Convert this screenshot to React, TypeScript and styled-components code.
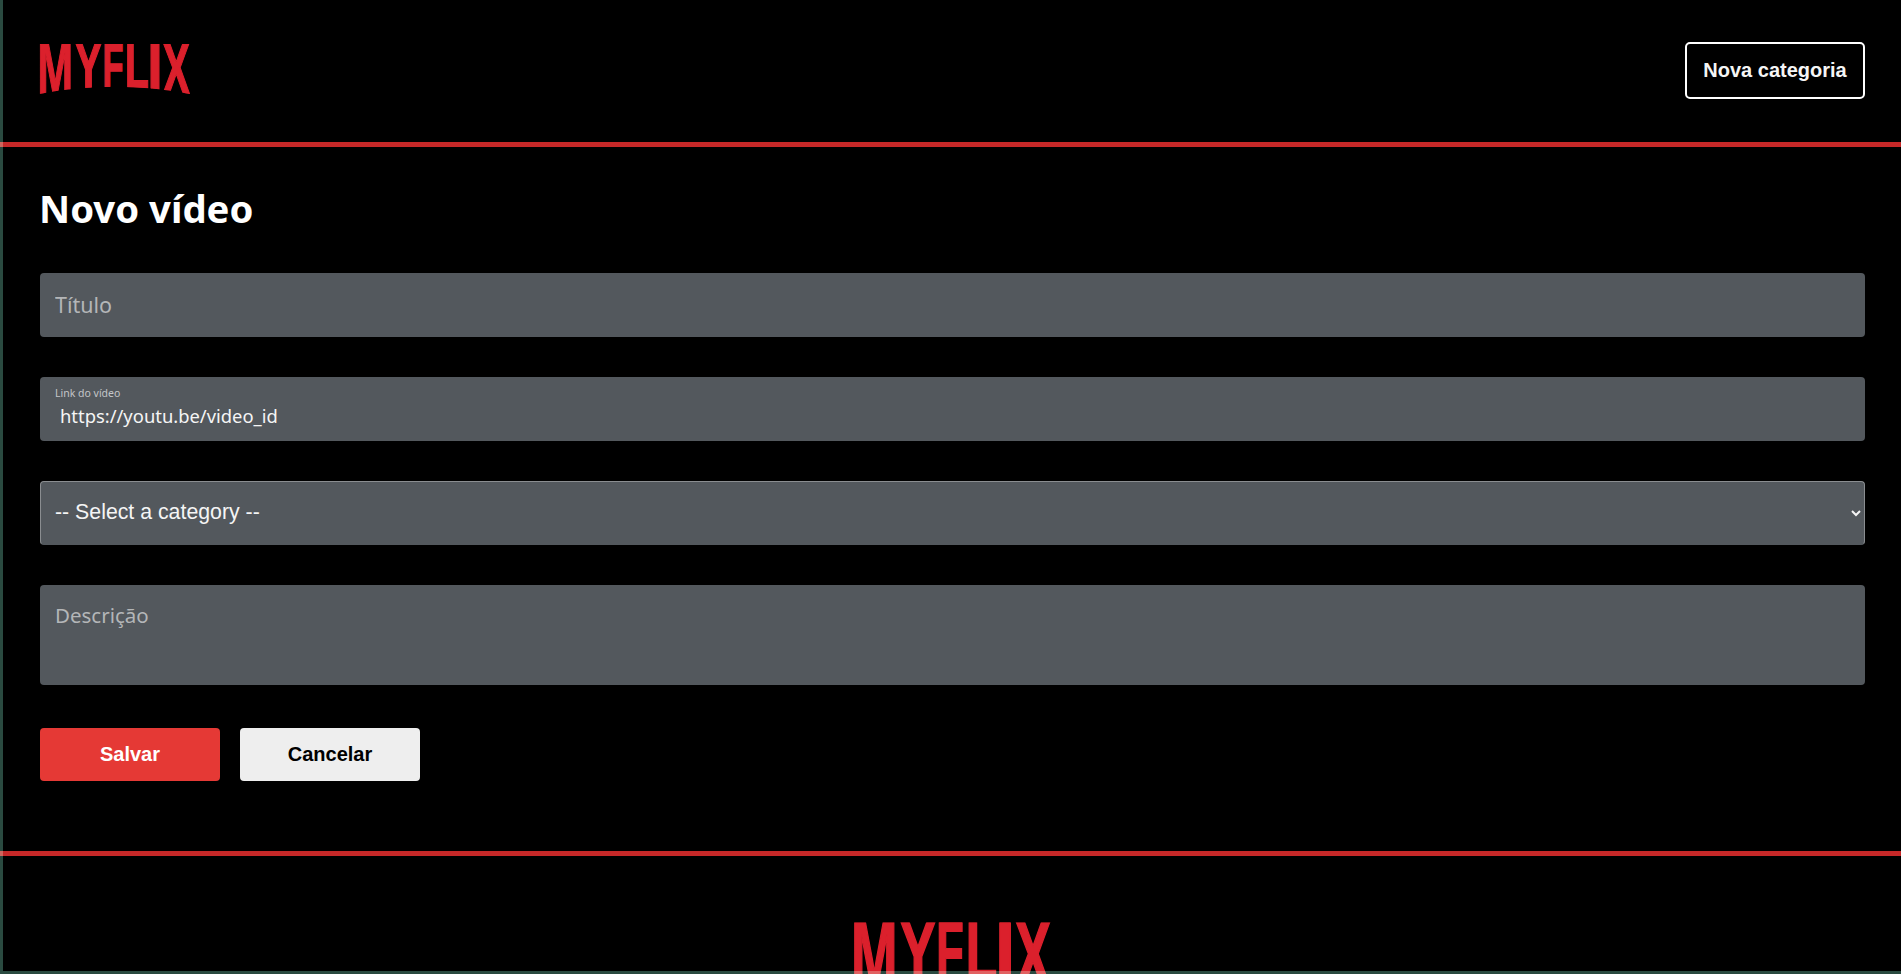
import * as React from 'react';
import styled, { createGlobalStyle } from 'styled-components';

const GlobalStyle = createGlobalStyle`
  html, body {
    margin: 0;
    padding: 0;
    height: 100%;
    background: #000;
    overflow: hidden;
  }
  * {
    box-sizing: border-box;
  }
`

const Page = styled.div`
  background: #000;
  color: #fff;
  font-family: "Liberation Sans", Arial, sans-serif;
`
const WindowEdge = styled.div`
  position: fixed;
  inset: 0;
  border-left: 3px solid #2a4a40;
  border-bottom: 3px solid #2a4a40;
  mix-blend-mode: screen;
  pointer-events: none;
`
const Header = styled.header`
  display: flex;
  justify-content: space-between;
  align-items: flex-start;
  height: 147px;
  padding: 42px 36px 0 39px;
  border-bottom: 5px solid #c62828;
`
const HeaderLogo = styled.div`
  margin-top: 2px;
  width: 151px;
  height: 50px;
`
const OutlineButton = styled.a`
  display: flex;
  align-items: center;
  justify-content: center;
  width: 180px;
  height: 57px;
  border: 2px solid #fff;
  border-radius: 5px;
  color: #f5f5f5;
  font-size: 20px;
  font-weight: 700;
  cursor: pointer;
`
const Main = styled.main`
  padding: 37px 36px 70px 39px;
`
const Title = styled.h1`
  margin: 0 0 40px;
  height: 49px;
  font-family: "Noto Sans", sans-serif;
  font-size: 38.3px;
  line-height: 49px;
  font-weight: 700;
  color: #fff;
`
const Form = styled.form`
  display: flex;
  flex-direction: column;
  margin-left: 1px;
`
const Field = styled.div`
  position: relative;
  margin-bottom: 40px;
`
const FloatingLabel = styled.label`
  position: absolute;
  top: 9px;
  left: 15px;
  font-family: "Noto Sans", sans-serif;
  font-size: 10.5px;
  line-height: 14px;
  color: #c4c6c8;
`
const TextInput = styled.input<{ $filled?: boolean }>`
  display: block;
  width: 100%;
  height: 64px;
  padding: ${(p) => (p.$filled ? '13px 15px 0 20px' : '0 15px 2px')};
  border: 0;
  border-radius: 4px;
  outline: none;
  background: #53585d;
  color: #f5f5f5;
  font-family: "Noto Sans", sans-serif;
  font-size: ${(p) => (p.$filled ? '18.4px' : '21.5px')};

  &::placeholder {
    color: #b4b6b8;
    opacity: 1;
  }
`
const CategorySelect = styled.select`
  display: block;
  width: 100%;
  height: 64px;
  padding: 0 0 2px 10px;
  border: 1px solid #8a8d90;
  border-bottom-color: #53585d;
  border-radius: 4px;
  outline: none;
  background: #53585d;
  color: #f5f5f5;
  font-family: "Liberation Sans", Arial, sans-serif;
  font-size: 21.3px;
`
const DescriptionInput = styled.textarea`
  display: block;
  width: 100%;
  height: 100px;
  padding: 16px 15px;
  border: 0;
  border-radius: 4px;
  outline: none;
  resize: none;
  background: #53585d;
  color: #f5f5f5;
  font-family: "Noto Sans", sans-serif;
  font-size: 20.5px;

  &::placeholder {
    color: #b4b6b8;
    opacity: 1;
  }
`
const Actions = styled.div`
  display: flex;
  gap: 20px;
  margin-top: 3px;
`
const ActionButton = styled.button<{ $primary?: boolean }>`
  width: 180px;
  height: 53px;
  border: 0;
  border-radius: 4px;
  background: ${(p) => (p.$primary ? '#e53935' : '#eeeeee')};
  color: ${(p) => (p.$primary ? '#fff' : '#000')};
  font-family: "Liberation Sans", Arial, sans-serif;
  font-size: 20px;
  font-weight: 700;
  cursor: pointer;
`
const Footer = styled.footer`
  display: flex;
  justify-content: center;
  padding: 66px 38px 40px 40px;
  border-top: 5px solid #c62828;
`
const FooterLogo = styled.div`
  width: 198px;
  height: 66px;
`
const LogoSvg = styled.svg`
  display: block;
  width: 100%;
  height: 100%;
`
const LogoLetter = styled.text`
  font-family: "Liberation Sans Narrow", "Liberation Sans", sans-serif;
  font-weight: 700;
  fill: #db202c;
  stroke: #db202c;
  stroke-width: 1.5px;
`

// letters are stretched to the logo's own widths, the arc at the bottom comes from the clip
const LETTERS = [
  { char: 'M', x: -1.5, width: 35.5, height: 50 },
  { char: 'Y', x: 36, width: 27, height: 44 },
  { char: 'F', x: 63.5, width: 21, height: 43 },
  { char: 'L', x: 86, width: 24, height: 44 },
  { char: 'I', x: 108.5, width: 15, height: 45 },
  { char: 'X', x: 123.5, width: 27.5, height: 50 },
];
const CAP_HEIGHT = 0.688;

const Logo = ({ clipId }: { clipId: string }) => (
  <LogoSvg viewBox="0 0 151 50" role="img" aria-label="MYFLIX">
    <clipPath id={clipId}>
      <path d="M0 0H151V50Q75.5 35.4 0 50Z" />
    </clipPath>
    <g clipPath={`url(#${clipId})`}>
      {LETTERS.map((l) => (
        <LogoLetter
          key={l.char}
          x={l.x}
          y={l.height}
          fontSize={l.height / CAP_HEIGHT}
          textLength={l.width}
          lengthAdjust="spacingAndGlyphs"
        >
          {l.char}
        </LogoLetter>
      ))}
    </g>
  </LogoSvg>
);

export default function App() {
  return (
    <Page>
      <GlobalStyle />
      <Header>
        <HeaderLogo>
          <Logo clipId="logo-header" />
        </HeaderLogo>
        <OutlineButton>Nova categoria</OutlineButton>
      </Header>
      <Main>
        <Title>Novo vídeo</Title>
        <Form>
          <Field>
            <TextInput placeholder="Título" />
          </Field>
          <Field>
            <FloatingLabel>Link do vídeo</FloatingLabel>
            <TextInput $filled defaultValue="https://youtu.be/video_id" />
          </Field>
          <Field>
            <CategorySelect defaultValue="">
              <option value="">-- Select a category --</option>
            </CategorySelect>
          </Field>
          <Field>
            <DescriptionInput placeholder="Descrição" />
          </Field>
          <Actions>
            <ActionButton $primary type="button">Salvar</ActionButton>
            <ActionButton type="button">Cancelar</ActionButton>
          </Actions>
        </Form>
      </Main>
      <Footer>
        <FooterLogo>
          <Logo clipId="logo-footer" />
        </FooterLogo>
      </Footer>
      <WindowEdge />
    </Page>
  );
}
